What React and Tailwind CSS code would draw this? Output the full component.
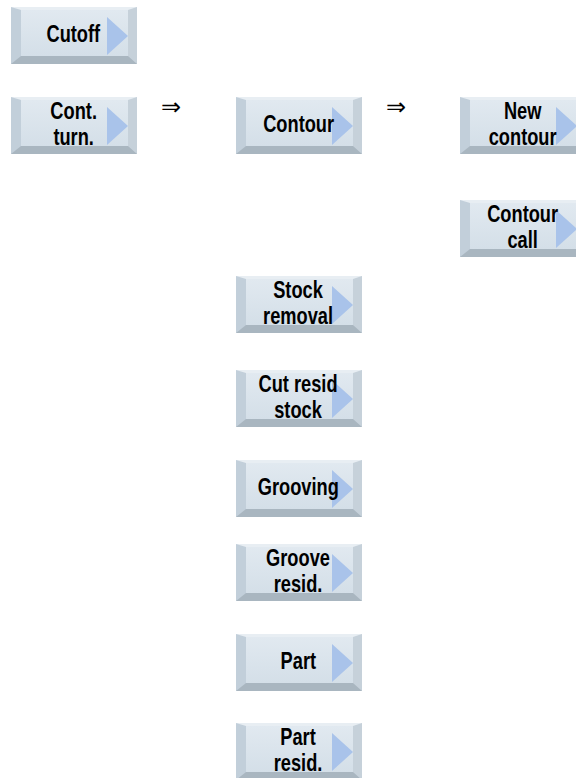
function SoftKey({ lines, className = "" }) {
  return (
    <div
      className={`relative w-[126px] h-[57px] shrink-0 border-l-[10px] border-t-[3px] border-r-[9px] border-b-[8px] border-l-[#c2cfda] border-t-[#e8eef3] border-r-[#c6d1da] border-b-[#a9b6c0] bg-gradient-to-b from-[#e1e9f0] to-[#d4dfe8] flex items-center justify-center pr-[2px] ${className}`}
    >
      <div className="absolute right-0 top-[7px] w-0 h-0 border-y-[19px] border-y-transparent border-l-[21px] border-l-[#a9c3ea]" />
      <div
        className="relative text-center text-black font-bold text-[24px] leading-[26px] whitespace-nowrap scale-x-[0.76] mt-[1px]"
        style={{ fontFamily: "'Liberation Sans', Arial, sans-serif" }}
      >
        {lines.map((l) => (
          <div key={l}>{l}</div>
        ))}
      </div>
    </div>
  );
}

function Arrow() {
  return (
    <div
      className="pl-[24px] -mt-[2px] text-[24px] leading-[24px] text-black"
      style={{ fontFamily: "'DejaVu Sans', sans-serif" }}
    >
      ⇒
    </div>
  );
}

export default function App() {
  return (
    <div className="w-[576px] h-[778px] overflow-hidden bg-white pl-[11px] pt-[7px]">
      <SoftKey lines={["Cutoff"]} />
      <div className="flex mt-[33px]">
        <SoftKey lines={["Cont.", "turn."]} />
        <div className="w-[99px] shrink-0">
          <Arrow />
        </div>
        <div className="flex flex-col shrink-0">
          <SoftKey lines={["Contour"]} />
          <SoftKey lines={["Stock", "removal"]} className="mt-[122px]" />
          <SoftKey lines={["Cut resid", "stock"]} className="mt-[37px]" />
          <SoftKey lines={["Grooving"]} className="mt-[33px]" />
          <SoftKey lines={["Groove", "resid."]} className="mt-[27px]" />
          <SoftKey lines={["Part"]} className="mt-[33px]" />
          <SoftKey lines={["Part", "resid."]} className="mt-[32px]" />
        </div>
        <div className="w-[98px] shrink-0">
          <Arrow />
        </div>
        <div className="flex flex-col shrink-0">
          <SoftKey lines={["New", "contour"]} />
          <SoftKey lines={["Contour", "call"]} className="mt-[46px]" />
        </div>
      </div>
    </div>
  );
}
